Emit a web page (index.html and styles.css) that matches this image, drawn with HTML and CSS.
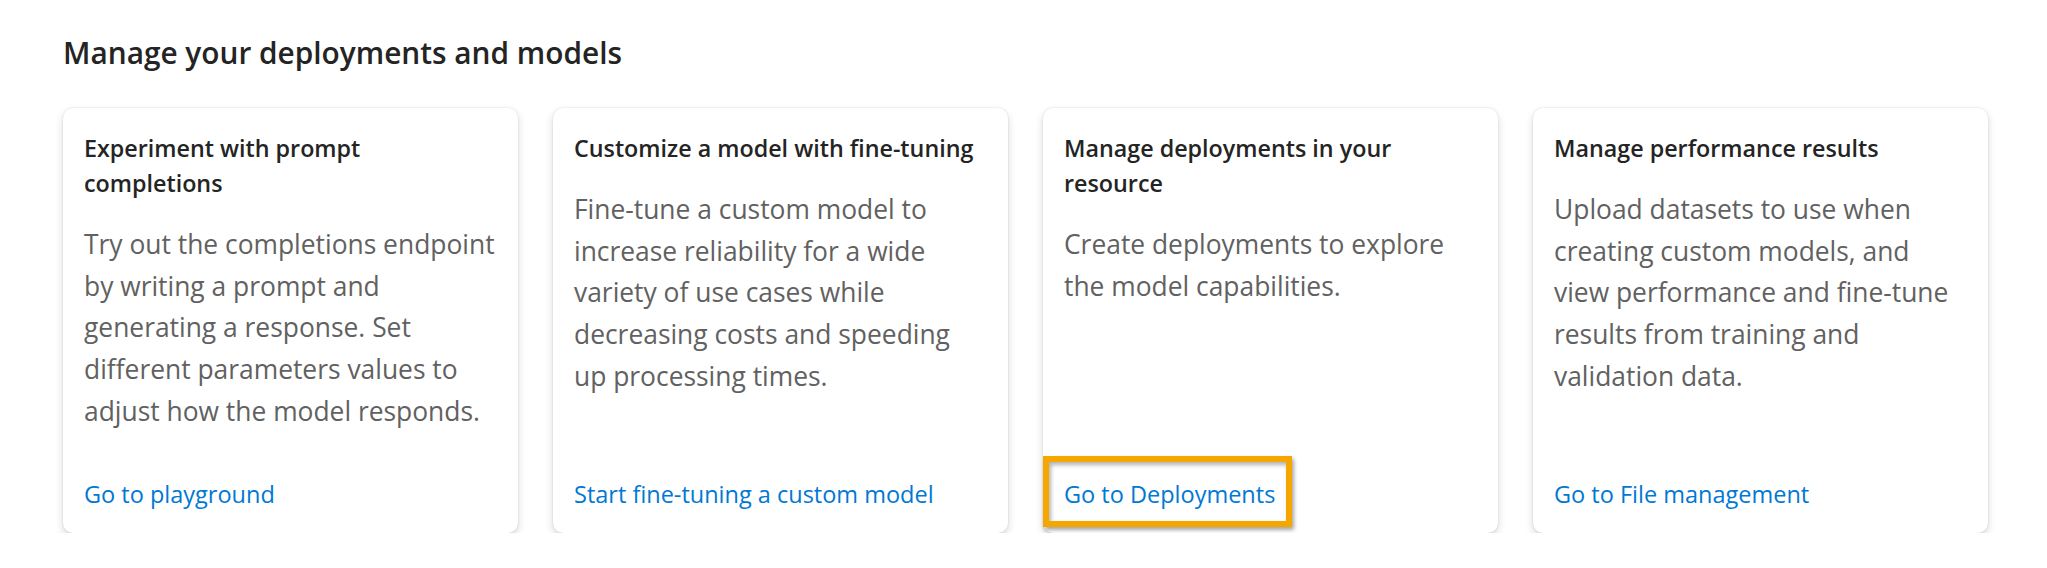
FILE: index.html
```html
<!DOCTYPE html>
<html lang="en">
<head>
<meta charset="utf-8">
<title>Manage your deployments and models</title>
<link rel="stylesheet" href="styles.css">
</head>
<body>
<main class="page">
  <h2 class="section-title">Manage your deployments and models</h2>
  <div class="cards">
    <section class="card">
      <h3 class="card-title">Experiment with prompt completions</h3>
      <p class="card-text">Try out the completions endpoint by writing a prompt and generating a response. Set different parameters values to adjust how the model responds.</p>
      <a class="card-link" href="#">Go to playground</a>
    </section>
    <section class="card">
      <h3 class="card-title">Customize a model with fine-tuning</h3>
      <p class="card-text">Fine-tune a custom model to increase reliability for a wide variety of use cases while decreasing costs and speeding up processing times.</p>
      <a class="card-link" href="#">Start fine-tuning a custom model</a>
    </section>
    <section class="card">
      <h3 class="card-title">Manage deployments in your resource</h3>
      <p class="card-text">Create deployments to explore the model capabilities.</p>
      <a class="card-link" href="#">Go to Deployments</a>
      <span class="highlight"></span>
    </section>
    <section class="card">
      <h3 class="card-title">Manage performance results</h3>
      <p class="card-text">Upload datasets to use when creating custom models, and view performance and fine-tune results from training and validation data.</p>
      <a class="card-link" href="#">Go to File management</a>
    </section>
  </div>
</main>
</body>
</html>
```
FILE: styles.css
```css
html, body {
  margin: 0;
  padding: 0;
  background: #ffffff;
}

body {
  font-family: "Open Sans", "Noto Sans", "Liberation Sans", sans-serif;
  color: #242424;
}

.page {
  padding: 33px 63px 0 63px;
}

.section-title {
  margin: 0;
  font-size: 29.8px;
  font-weight: 600;
  line-height: 40px;
  color: #242424;
}

.cards {
  margin-top: 35px;
  display: grid;
  grid-template-columns: repeat(4, 455px);
  column-gap: 35px;
}

.card {
  position: relative;
  box-sizing: border-box;
  height: 425px;
  padding: 23px 21px 21px 21px;
  background: #ffffff;
  border-radius: 10px;
  box-shadow: 0 0 2px rgba(0, 0, 0, 0.14), 0 4px 9px rgba(0, 0, 0, 0.15);
  display: flex;
  flex-direction: column;
}

.card-title {
  margin: 0;
  font-size: 23.3px;
  font-weight: 600;
  line-height: 35px;
  color: #242424;
}

.card-text {
  margin: 23px 0 0 0;
  font-size: 26.4px;
  line-height: 41.7px;
  color: #616161;
}

.card-link {
  margin-top: auto;
  font-size: 23.5px;
  line-height: 36px;
  color: #0078d4;
  text-decoration: none;
  align-self: flex-start;
}

.highlight {
  position: absolute;
  left: 0;
  bottom: 6px;
  width: 249px;
  height: 71px;
  box-sizing: border-box;
  border: 6px solid #f5a700;
  box-shadow: 2px 3px 4px rgba(0, 0, 0, 0.35), inset 2px 3px 4px rgba(0, 0, 0, 0.3);
  pointer-events: none;
}
```
